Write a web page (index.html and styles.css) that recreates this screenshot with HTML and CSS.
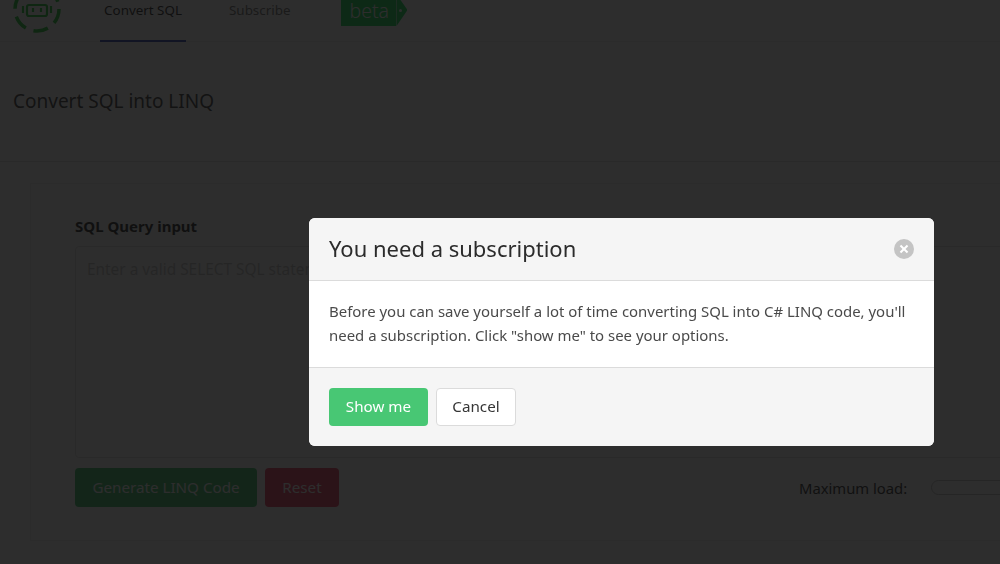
FILE: index.html
```html
<!DOCTYPE html>
<html lang="en">
<head>
  <meta charset="UTF-8" />
  <meta name="viewport" content="width=device-width, initial-scale=1.0" />
  <title>Convert SQL into LINQ</title>
  <link rel="stylesheet" href="styles.css">
</head>
<body>
  <nav class="topbar">
    <svg class="logo" viewBox="0 0 50 50" width="50" height="50" aria-hidden="true">
      <circle class="logo-ring" cx="25" cy="25" r="22" />
      <rect class="logo-face" x="15" y="21" width="20" height="11" rx="2" />
      <path class="logo-bits" d="M11 22v7M39 22v7M21 24v4M29 24v4" />
    </svg>
    <a class="tab tab-active" href="#">Convert SQL</a>
    <a class="tab" href="#">Subscribe</a>
    <span class="beta">beta<i class="beta-dot"></i></span>
  </nav>

  <header class="page-head">
    <h1>Convert SQL into LINQ</h1>
  </header>

  <main class="panel">
    <label class="field-label" for="sqlInput">SQL Query input</label>
    <textarea id="sqlInput" placeholder="Enter a valid SELECT SQL statement"></textarea>
    <div class="actions">
      <button class="btn btn-green">Generate LINQ Code</button>
      <button class="btn btn-red">Reset</button>
      <span class="load-label">Maximum load:</span>
      <span class="load-bar"></span>
    </div>
  </main>

  <div class="overlay"></div>

  <section class="modal">
    <div class="modal-head">
      <h2>You need a subscription</h2>
      <button class="close" aria-label="Close"></button>
    </div>
    <div class="modal-body">
      Before you can save yourself a lot of time converting SQL into C# LINQ code, you'll need a subscription. Click "show me" to see your options.
    </div>
    <div class="modal-foot">
      <button class="btn btn-show">Show me</button>
      <button class="btn btn-cancel">Cancel</button>
    </div>
  </section>
</body>
</html>
```

FILE: styles.css
```css
* {
  box-sizing: border-box;
}

html,
body {
  height: 564px;
  overflow: hidden;
}

body {
  margin: 0;
  background: #fff;
  color: #4a4a4a;
  font-family: "Noto Sans", Arial, sans-serif;
  font-size: 16px;
}

.topbar {
  display: flex;
  align-items: flex-start;
  height: 42px;
  border-bottom: 1px solid #ededed;
}

.logo {
  flex: none;
  margin: -16px 0 0 12px;
}

.logo-ring {
  fill: none;
  stroke: #2ecc40;
  stroke-width: 3.5;
  stroke-dasharray: 15 8;
}

.logo-face,
.logo-bits {
  fill: none;
  stroke: #2ecc40;
  stroke-width: 2.2;
}

.tab {
  height: 42px;
  padding: 1px 5px 0;
  color: #7a7a7a;
  font-size: 13.4px;
  line-height: 18px;
  text-decoration: none;
}

.tab:nth-of-type(1) {
  width: 86px;
  margin-left: 38px;
  padding: 1px 0 0;
  text-align: center;
  color: #363636;
  border-bottom: 2px solid #3850b7;
}

.tab:nth-of-type(2) {
  margin-left: 38px;
}

.beta {
  position: relative;
  width: 55px;
  height: 26px;
  margin-left: 46px;
  padding-left: 8px;
  background: #1fe060;
  color: #fff;
  font-size: 19.5px;
  font-weight: 300;
  line-height: 22px;
}

/* pointed end of the tag */
.beta::before {
  content: "";
  position: absolute;
  top: 0;
  left: 100%;
  width: 11px;
  height: 26px;
  background: #1fe060;
  clip-path: polygon(0 0, 4px 0, 11px 10px, 0 100%);
}

.beta-dot {
  position: absolute;
  top: 9px;
  left: 58px;
  width: 3px;
  height: 3px;
  border-radius: 50%;
  background: #fff;
}

.page-head {
  height: 120px;
  padding: 47px 13px 0;
  border-bottom: 1px solid #e4e4e4;
}

h1 {
  margin: 0;
  color: #4a4a4a;
  font-size: 19px;
  font-weight: 400;
  line-height: 24px;
}

.panel {
  width: 1100px;
  height: 358px;
  margin: 21px 0 0 30px;
  padding: 32px 0 0 44px;
  border: 1px solid #f0f0f0;
}

.field-label {
  display: block;
  margin-bottom: 10px;
  color: #363636;
  font-size: 15px;
  font-weight: 700;
  line-height: 20px;
}

textarea {
  display: block;
  width: 1000px;
  height: 212px;
  padding: 12px 11px;
  border: 1px solid #e4e4e4;
  border-radius: 4px;
  font: inherit;
  font-size: 15.4px;
  resize: none;
}

textarea::placeholder {
  color: #c8c8c8;
}

.actions {
  display: flex;
  align-items: center;
  gap: 8px;
  margin-top: 10px;
}

.btn {
  height: 39px;
  padding: 0 0 2px;
  border: 1px solid transparent;
  border-radius: 4px;
  font: inherit;
  font-size: 15.2px;
  white-space: nowrap;
}

.btn-green {
  width: 182px;
  background: #48c774;
  color: #fff;
}

.btn-red {
  width: 74px;
  background: #f14668;
  color: #fff;
}

.load-label {
  margin-left: 452px;
  color: #3a3a3a;
  font-size: 14.8px;
}

.load-bar {
  width: 120px;
  height: 15px;
  margin-left: 16px;
  border: 1px solid #c4c4c4;
  border-radius: 8px;
}

.overlay {
  position: fixed;
  inset: 0;
  background: rgba(10, 10, 10, 0.86);
}

.modal {
  position: fixed;
  top: 218px;
  left: 309px;
  width: 625px;
  height: 228px;
  display: flex;
  flex-direction: column;
  border-radius: 6px;
  overflow: hidden;
  background: #fff;
}

.modal-head {
  display: flex;
  align-items: center;
  justify-content: space-between;
  height: 63px;
  padding: 0 20px;
  background: #f5f5f5;
  border-bottom: 1px solid #dbdbdb;
}

h2 {
  margin: -2px 0 0;
  color: #2b2b2b;
  font-size: 22px;
  font-weight: 400;
}

.close {
  position: relative;
  width: 20px;
  height: 20px;
  padding: 0;
  border: 0;
  border-radius: 50%;
  background: #c4c4c4;
}

.close::before,
.close::after {
  content: "";
  position: absolute;
  top: 9px;
  left: 5px;
  width: 10px;
  height: 2px;
  background: #fff;
  transform: rotate(45deg);
}

.close::after {
  transform: rotate(-45deg);
}

.modal-body {
  height: 86px;
  padding: 19px 20px;
  color: #4a4a4a;
  font-size: 14.95px;
  line-height: 23.5px;
}

.modal-foot {
  flex: 1;
  display: flex;
  align-items: center;
  gap: 8px;
  padding: 0 20px;
  background: #f5f5f5;
  border-top: 1px solid #dbdbdb;
}

.btn-show {
  width: 99px;
  height: 38px;
  background: #48c774;
  color: #fff;
}

.btn-cancel {
  width: 80px;
  height: 38px;
  background: #fff;
  border-color: #dbdbdb;
  color: #363636;
}
```
